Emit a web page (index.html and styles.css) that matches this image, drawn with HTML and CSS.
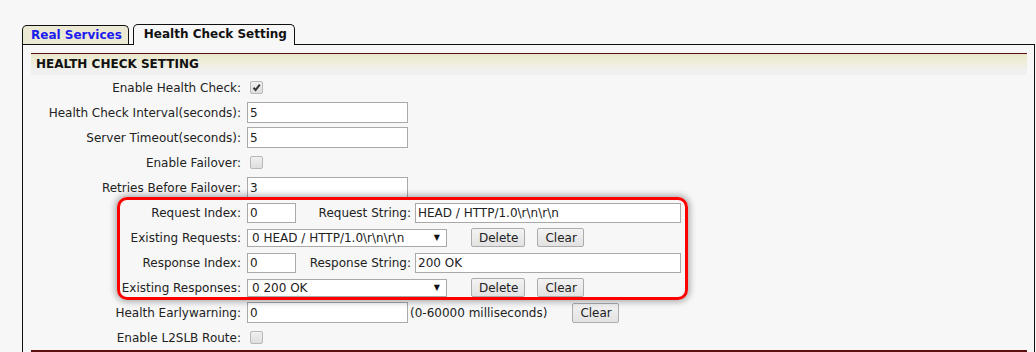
FILE: index.html
```html
<!DOCTYPE html>
<html lang="en">
<head>
  <meta charset="UTF-8">
  <title>Health Check Setting</title>
  <link rel="stylesheet" href="styles.css">
</head>
<body>
  <div class="tabs">
    <a class="tab" href="#">Real Services</a>
    <span class="tab active">Health Check Setting</span>
  </div>
  <div class="panel">
    <div class="section-head">HEALTH CHECK SETTING</div>

    <div class="row">
      <label class="lbl">Enable Health Check:</label>
      <span class="check"><svg width="13" height="13" viewBox="0 0 13 13"><path d="M3.5 6.8 L5.6 9 L9.8 3.6" fill="none" stroke="#333" stroke-width="2"/></svg></span>
    </div>
    <div class="row">
      <label class="lbl">Health Check Interval(seconds):</label>
      <input class="txt" type="text" value="5">
    </div>
    <div class="row">
      <label class="lbl">Server Timeout(seconds):</label>
      <input class="txt" type="text" value="5">
    </div>
    <div class="row">
      <label class="lbl">Enable Failover:</label>
      <span class="check"></span>
    </div>
    <div class="row">
      <label class="lbl">Retries Before Failover:</label>
      <input class="txt" type="text" value="3">
    </div>

    <div class="group">
      <div class="row">
        <label class="lbl">Request Index:</label>
        <input class="txt short" type="text" value="0">
        <label class="lbl2">Request String:</label>
        <input class="txt long" type="text" value="HEAD / HTTP/1.0\r\n\r\n">
      </div>
      <div class="row">
        <label class="lbl">Existing Requests:</label>
        <div class="select"><select><option>0 HEAD / HTTP/1.0\r\n\r\n</option></select></div>
        <button class="btn first">Delete</button>
        <button class="btn">Clear</button>
      </div>
      <div class="row">
        <label class="lbl">Response Index:</label>
        <input class="txt short" type="text" value="0">
        <label class="lbl2">Response String:</label>
        <input class="txt long" type="text" value="200 OK">
      </div>
      <div class="row">
        <label class="lbl">Existing Responses:</label>
        <div class="select"><select><option>0 200 OK</option></select></div>
        <button class="btn first">Delete</button>
        <button class="btn">Clear</button>
      </div>
    </div>

    <div class="row">
      <label class="lbl">Health Earlywarning:</label>
      <input class="txt" type="text" value="0">
      <span class="note">(0-60000 milliseconds)</span>
      <button class="btn later">Clear</button>
    </div>
    <div class="row">
      <label class="lbl">Enable L2SLB Route:</label>
      <span class="check"></span>
    </div>
    <div class="section-foot"></div>
  </div>
</body>
</html>
```

FILE: styles.css
```css
body {
  margin: 0;
  background: #f7f7f7;
  font-family: 'DejaVu Sans', Verdana, sans-serif;
  font-size: 12px;
  color: #222;
}
.tabs {
  display: flex;
  align-items: flex-end;
  gap: 4px;
  padding: 24px 0 0 22px;
}
.tab {
  height: 18px;
  line-height: 19px;
  padding: 0 6px 0 8px;
  border: 1px solid #111;
  border-bottom: none;
  border-radius: 5px 5px 0 0;
  background: #ebe9d4;
  font-size: 12px;
  font-weight: bold;
  color: #1b1bf0;
  text-decoration: none;
}
.tab.active {
  height: 20px;
  padding: 0 7px 0 10px;
  margin-bottom: -1px;
  background: #f7f7f7;
  color: #111;
  position: relative;
  z-index: 1;
}
.panel {
  margin: 0 1px 0 22px;
  border: 1px solid #111;
  border-bottom: none;
  padding: 8px 7px 0 8px;
}
.section-head {
  height: 21px;
  line-height: 21px;
  padding-left: 5px;
  border-top: 1px solid #5c0d0d;
  background: linear-gradient(#e9e7cb, #efedd9 35%, #f0f0f0 80%);
  font-size: 12px;
  font-weight: bold;
  color: #111;
}
.row {
  display: flex;
  align-items: center;
  height: 25px;
}
.lbl {
  width: 210px;
  margin-right: 6px;
  text-align: right;
  white-space: nowrap;
}
.lbl2 {
  width: 115px;
  margin-right: 4px;
  text-align: right;
  white-space: nowrap;
}
.txt {
  box-sizing: border-box;
  width: 161px;
  height: 21px;
  margin: 0;
  padding: 0 2px;
  border: 1px solid #a9a9a9;
  background: #fff;
  font: inherit;
  color: #222;
}
.txt.short {
  width: 49px;
  height: 20px;
}
.txt.long {
  width: 266px;
  height: 20px;
}
.check {
  box-sizing: border-box;
  width: 13px;
  height: 13px;
  margin-left: 3px;
  border: 1px solid #b8b8b8;
  border-radius: 2px;
  background: linear-gradient(#f0f0f0, #dedede);
  display: flex;
}
.check svg {
  margin: -1px;
}
.select {
  box-sizing: border-box;
  width: 200px;
  height: 18px;
  border: 1px solid #a9a9a9;
  background: #fff;
  display: flex;
  align-items: center;
}
.select select {
  flex: 1;
  appearance: none;
  border: none;
  background: transparent;
  padding: 0 0 0 4px;
  font: inherit;
  color: #222;
  outline: none;
}
.select::after {
  content: "\25BC";
  font-size: 8px;
  margin-right: 6px;
  color: #111;
}
.btn {
  box-sizing: border-box;
  height: 19px;
  padding: 0 6px 0 7px;
  margin-left: 12px;
  border: 1px solid #acacac;
  border-radius: 2px;
  background: linear-gradient(#f3f3f3, #e2e2e2);
  font: inherit;
  color: #222;
}
.btn.first {
  margin-left: 24px;
}
.btn.later {
  margin-left: 25px;
  height: 20px;
}
.note {
  margin-left: 2px;
}
.group {
  position: relative;
}
.group::before {
  content: "";
  position: absolute;
  top: -3px;
  bottom: 0;
  left: 86px;
  right: 339px;
  border: 3px solid #f00;
  border-radius: 10px;
  box-shadow: 0 0 6px 2px rgba(0,0,0,0.3);
  pointer-events: none;
}
.section-foot {
  border-top: 2px solid #5c0d0d;
}
```
